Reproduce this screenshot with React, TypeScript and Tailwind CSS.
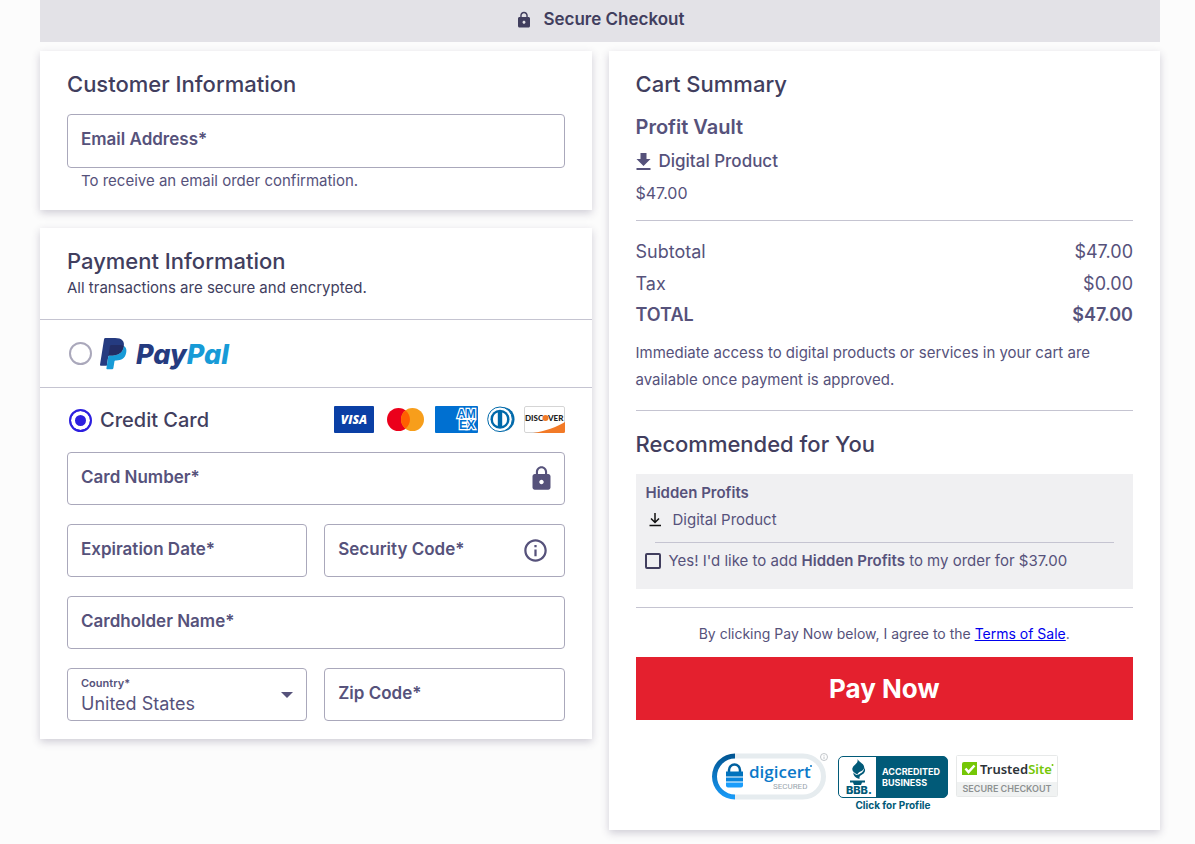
import { useState } from "react";
import type { ReactNode } from "react";
import { MdInfoOutline, MdLock } from "react-icons/md";

const fieldBox =
  "flex items-center rounded border border-[#aaa8bb] bg-white px-[13px] focus-within:border-[#2d1fdf]";

type FieldProps = {
  id: string;
  label: string;
  type?: string;
  className?: string;
  children?: ReactNode;
};

function Field({ id, label, type = "text", className = "h-[53px]", children }: FieldProps) {
  return (
    <div className={`${fieldBox} ${className}`}>
      <label htmlFor={id} className="shrink-0 pb-0.5 text-[17px] font-semibold">
        {label}
      </label>
      <input id={id} type={type} className="h-full min-w-0 flex-1 bg-transparent px-2 outline-none" />
      {children}
    </div>
  );
}

function Radio({ id, checked, onChange }: { id: string; checked: boolean; onChange: () => void }) {
  return (
    <input
      id={id}
      type="radio"
      name="method"
      checked={checked}
      onChange={onChange}
      className="size-[23px] shrink-0 appearance-none rounded-full border-2 border-[#aaa8bb] bg-white checked:border-[#2d1fdf] checked:bg-[#2d1fdf] checked:shadow-[inset_0_0_0_4px_white]"
    />
  );
}

function PayPalLogo() {
  return (
    <svg width="130" height="34" viewBox="0 0 130 34" role="img" aria-label="PayPal">
      <g transform="translate(0 1) scale(0.1035)">
        <path
          fill="#253b80"
          d="M217.168 23.507C203.234 7.625 178.046.816 145.823.816h-93.52A13.39 13.39 0 0 0 39.076 12.11L.136 259.077c-.774 4.87 2.997 9.28 7.933 9.28h57.736l14.5-91.971-.45 2.88c1.033-6.501 6.593-11.296 13.177-11.296h27.436c53.898 0 96.101-21.892 108.429-85.221.366-1.873.683-3.696.957-5.477 3.671-23.407-.025-39.34-12.686-53.765"
        />
        <path
          fill="#179bd7"
          d="M228.897 82.749c-12.328 63.32-54.53 85.221-108.429 85.221H93.024c-6.584 0-12.145 4.795-13.168 11.296L61.817 293.621c-.674 4.262 2.622 8.124 6.934 8.124h48.67a11.71 11.71 0 0 0 11.563-9.88l.474-2.48 9.173-58.136.591-3.213a11.71 11.71 0 0 1 11.562-9.88h7.284c47.147 0 84.064-19.154 94.852-74.55 4.503-23.15 2.173-42.478-9.739-56.054-3.613-4.112-8.1-7.508-13.327-10.28-.283 1.79-.59 3.604-.957 5.477z"
        />
        <path
          fill="#222d65"
          d="M216.952 72.128a89.928 89.928 0 0 0-5.818-1.49 109.904 109.904 0 0 0-6.177-1.174c-7.408-1.199-15.5-1.765-24.19-1.765h-73.309a11.57 11.57 0 0 0-5.053 1.149 11.683 11.683 0 0 0-6.51 8.74l-15.582 98.798-.45 2.88c1.025-6.501 6.585-11.296 13.17-11.296h27.444c53.898 0 96.1-21.892 108.428-85.221.367-1.873.675-3.688.958-5.477-3.122-1.648-6.501-3.072-10.14-4.279a83.26 83.26 0 0 0-2.77-.865"
        />
      </g>
      <text x="36" y="27" fontFamily="Inter, sans-serif" fontSize="27" fontWeight="800" fontStyle="italic">
        <tspan fill="#253b80">Pay</tspan>
        <tspan fill="#179bd7">Pal</tspan>
      </text>
    </svg>
  );
}

function CardBrands() {
  return (
    <svg width="231" height="28" viewBox="0 0 231 28" role="img" aria-label="Accepted cards">
      <rect x="0" y="0" width="40" height="27" rx="1" fill="#0a3fa5" />
      <text x="20" y="18" textAnchor="middle" fontFamily="'Open Sans', sans-serif" fontSize="12" fontWeight="800" fontStyle="italic" fill="#fff">
        VISA
      </text>

      <circle cx="64.5" cy="13.5" r="11.5" fill="#eb001b" />
      <circle cx="78.5" cy="13.5" r="11.5" fill="#f79e1b" />
      <path d="M71.5 4.4a11.5 11.5 0 0 1 0 18.2a11.5 11.5 0 0 1 0-18.2z" fill="#ff5f00" />

      <svg x="101" y="0" width="43" height="27">
        <rect width="43" height="27" rx="1" fill="#0070d1" />
        <g fontFamily="'Liberation Sans', Arial, sans-serif" fontSize="12" fontWeight="700" fill="#0070d1" stroke="#fff" strokeWidth="2.4" paintOrder="stroke">
          <text x="22" y="12">AM</text>
          <text x="24" y="23">EX</text>
        </g>
      </svg>

      <path d="M166 1h2c7.500 0 12.500 5.500 12.500 12.300S175 25.500 168 25.500h-2z" fill="#0069aa" />
      <circle cx="166" cy="13.300" r="12.300" fill="#fff" stroke="#0069aa" />
      <circle cx="166" cy="13.300" r="9.500" fill="#0069aa" />
      <path d="M163.800 6.500v13.600a7.200 7.200 0 0 1 0-13.600zM168.200 6.500v13.600a7.200 7.200 0 0 0 0-13.600z" fill="#fff" />

      <rect x="190.500" y=".5" width="40" height="26" rx="1.500" fill="#fff" stroke="#d5d5d5" />
      <path d="M199 27c12-2 24-6 32-11v9.500a1.500 1.500 0 0 1-1.500 1.500z" fill="#f27a27" />
      <g fontFamily="Lato, sans-serif" fontSize="8" fontWeight="900" fill="#222">
        <text x="191" y="15">DISC</text>
        <text x="214" y="15">VER</text>
      </g>
      <circle cx="211.500" cy="12" r="3" fill="#f27a27" />
    </svg>
  );
}

function DigicertSeal() {
  return (
    <svg width="119" height="58" viewBox="0 0 119 58" role="img" aria-label="DigiCert Secured">
      <defs>
        <linearGradient id="seal" x1="0" y1="0" x2="0" y2="1">
          <stop offset="0" stopColor="#00538f" />
          <stop offset="1" stopColor="#1a9dfb" />
        </linearGradient>
      </defs>
      <path d="M24 3h68a20.500 20.500 0 0 1 0 41H24" fill="none" stroke="#e6ecef" strokeWidth="5" />
      <path d="M24 0.500v5a18 18 0 0 0 0 36v5a23 23 0 0 1 0-46z" fill="url(#seal)" />
      <path d="M18 20v-3a5.500 5.500 0 0 1 11 0v3" fill="none" stroke="#00609f" strokeWidth="2.500" />
      <path d="M15 18.500h17v5H15z" fill="#0072bd" />
      <path d="M15 24.500h17v4H15z" fill="#0a86dc" />
      <path d="M15 29.500h17v3a2 2 0 0 1-2 2H17a2 2 0 0 1-2-2z" fill="#1a9dfb" />
      <text x="38" y="25" fontFamily="'Open Sans', sans-serif" fontSize="17" fontWeight="600" fill="#0b79c9">
        digicert
      </text>
      <circle cx="100" cy="13" r="1" fill="#0b79c9" />
      <text x="62" y="36" fontFamily="Roboto, sans-serif" fontSize="8" fill="#9aa5ad">
        SECURED
      </text>
      <circle cx="113" cy="4" r="3.500" fill="none" stroke="#b2b8bd" strokeWidth=".8" />
      <path d="M113 3.500v2.500M113 2v.8" stroke="#b2b8bd" strokeWidth=".8" />
    </svg>
  );
}

function BbbSeal() {
  return (
    <svg width="110" height="58" viewBox="0 0 110 58" role="img" aria-label="BBB Accredited Business">
      <rect x=".5" y="3.500" width="109" height="41" rx="4.500" fill="#fff" stroke="#015a78" />
      <path d="M38 3.500h67a4.500 4.500 0 0 1 4.500 4.500v32a4.500 4.500 0 0 1-4.500 4.500H38z" fill="#015a78" />
      <path d="M19.500 6c1 3 8 5 6.500 9.500-1 3-6 3-6.500 6-3-1.500-6-3.500-5-6.500 1-3.500 6-4 5-9z" fill="#015a78" />
      <path d="M26.500 14.500c2 5-1.500 6.500-4 8-1 .8-1.200 2-1 3.500-4-1-6.500-3.500-6-6.500 1.500 2 3 3 5 2 3-1.500 5.500-3 6-7z" fill="#015a78" />
      <path d="M12 27.500h15v2h-3l-1 2.500h-7l-1-2.500h-3z" fill="#015a78" />
      <text x="8" y="41" fontFamily="Inter, sans-serif" fontSize="11" fontWeight="800" fill="#015a78">
        BBB.
      </text>
      <g fontFamily="Inter, sans-serif" fontSize="9" fontWeight="700" fill="#fff">
        <text x="44" y="22">ACCREDITED</text>
        <text x="44" y="33">BUSINESS</text>
      </g>
      <text x="55" y="56" textAnchor="middle" fontFamily="Inter, sans-serif" fontSize="10" fontWeight="700" fill="#015a78">
        Click for Profile
      </text>
    </svg>
  );
}

function TrustedSiteSeal() {
  return (
    <svg width="102" height="58" viewBox="0 0 102 58" role="img" aria-label="TrustedSite Secure Checkout">
      <rect x=".5" y="2.500" width="101" height="41" rx="1" fill="#fff" stroke="#e7e9e9" />
      <path d="M1 29h100v14H1z" fill="#f0f2f2" />
      <path d="M8 9h13v13H6V11a2 2 0 0 1 2-2z" fill="#75c706" />
      <path d="M9.500 15.500l3 3.500 6-6.500" fill="none" stroke="#fff" strokeWidth="2.500" />
      <text x="24" y="21" fontFamily="'Noto Sans', sans-serif" fontSize="13" fontWeight="600">
        <tspan fill="#2d3338">Trusted</tspan>
        <tspan fill="#75c706">Site</tspan>
      </text>
      <circle cx="96.500" cy="12" r="1" fill="#75c706" />
      <text x="51" y="39" textAnchor="middle" fontFamily="Inter, sans-serif" fontSize="9" fontWeight="600" fill="#8d9191">
        SECURE CHECKOUT
      </text>
    </svg>
  );
}

const card = "bg-white shadow-[0_3px_8px_rgba(65,60,95,0.24)]";
const heading = "text-[22px] leading-[30px] font-medium text-[#413e5e]";
const rule = "border-[#c5c4d1]";

const totals = [
  { label: "Subtotal", value: "$47.00" },
  { label: "Tax", value: "$0.00" },
];

export default function App() {
  const [method, setMethod] = useState("card");

  return (
    <div className="min-h-screen bg-[#fcfcfc] pr-[35px] pb-3.5 pl-10 font-[Inter,sans-serif] text-[#56527b]">
      <header className="flex h-[42px] items-center justify-center gap-2.5 bg-[#e3e2e7] pb-[3px] text-[17px] font-semibold text-[#413e5e]">
        <MdLock size={18} />
        <span>Secure Checkout</span>
      </header>

      <main className="mt-[9px] grid grid-cols-2 items-start gap-[17px]">
        <div className="flex flex-col gap-[18px]">
          {/* Customer */}
          <section className={`${card} px-[27px] pt-[18px] pb-[17px]`}>
            <h2 className={heading}>Customer Information</h2>
            <Field id="email" type="email" label="Email Address*" className="mt-[15px] h-[54px]" />
            <p className="mt-px pl-3.5 text-[15px] leading-6">To receive an email order confirmation.</p>
          </section>

          {/* Payment */}
          <section className={`${card} pt-[18px] pb-[18px]`}>
            <div className={`border-b px-[27px] pb-[19px] ${rule}`}>
              <h2 className={heading}>Payment Information</h2>
              <p className="text-[15px] leading-6 text-[#413e5e]">
                All transactions are secure and encrypted.
              </p>
            </div>

            <div className={`flex h-[68px] items-center gap-2 border-b px-[29px] ${rule}`}>
              <Radio id="paypal" checked={method === "paypal"} onChange={() => setMethod("paypal")} />
              <label htmlFor="paypal">
                <PayPalLogo />
              </label>
            </div>

            <div className="flex h-16 items-center gap-2 pr-[27px] pl-[29px]">
              <Radio id="credit" checked={method === "card"} onChange={() => setMethod("card")} />
              <label htmlFor="credit" className="flex-1 text-[20px] font-medium text-[#413e5e]">
                Credit Card
              </label>
              <CardBrands />
            </div>

            <div className="grid grid-cols-2 gap-x-[17px] gap-y-[19px] px-[27px]">
              <Field id="number" label="Card Number*" className="col-span-2 h-[53px]">
                <MdLock size={27} className="-mr-1 shrink-0" />
              </Field>
              <Field id="expiry" label="Expiration Date*" />
              <Field id="cvc" label="Security Code*">
                <button type="button" aria-label="About the security code" className="mr-0.5 shrink-0">
                  <MdInfoOutline size={27} />
                </button>
              </Field>
              <Field id="holder" label="Cardholder Name*" className="col-span-2 h-[53px]" />
              <div className={`${fieldBox} h-[53px]`}>
                <div className="min-w-0 flex-1">
                  <label htmlFor="country" className="block text-[11px] leading-[18px] font-semibold">
                    Country*
                  </label>
                  <select
                    id="country"
                    className="block w-full appearance-none bg-transparent text-[18px] leading-6 outline-none"
                  >
                    <option>United States</option>
                    <option>Canada</option>
                  </select>
                </div>
                <svg width="12" height="6" viewBox="0 0 12 6" className="shrink-0" aria-hidden="true">
                  <path d="M0 0h12L6 6z" fill="currentColor" />
                </svg>
              </div>
              <Field id="zip" label="Zip Code*" />
            </div>
          </section>
        </div>

        {/* Cart */}
        <section className={`${card} px-[27px] pt-[18px] pb-[19px]`}>
          <h2 className={heading}>Cart Summary</h2>
          <h3 className="mt-3.5 text-[20px] leading-7 font-semibold">Profit Vault</h3>
          <p className="mt-1.5 flex items-center gap-2 text-[17px] leading-7 font-medium">
            <svg width="15" height="17" viewBox="5 3 14 17" aria-hidden="true">
              <path d="M19 9h-4V3H9v6H5l7 7 7-7zM5 18v2h14v-2H5z" fill="currentColor" />
            </svg>
            Digital Product
          </p>
          <p className="mt-1.5 text-[16px] leading-6">$47.00</p>

          <dl className={`mt-[15px] border-t pt-[15px] text-[18px] leading-8 ${rule}`}>
            {totals.map((row) => (
              <div key={row.label} className="flex justify-between">
                <dt>{row.label}</dt>
                <dd>{row.value}</dd>
              </div>
            ))}
            <div className="flex justify-between leading-[30px] font-semibold">
              <dt>TOTAL</dt>
              <dd>$47.00</dd>
            </div>
          </dl>
          <p className="mt-[9px] text-[15px] leading-[27px]">
            Immediate access to digital products or services in your cart are available once payment is
            approved.
          </p>

          <h2 className={`mt-[17px] border-t pt-[18px] ${rule} ${heading}`}>Recommended for You</h2>
          <div className="mt-[15px] bg-[#f0f0f2] px-2.5 pt-[5px] pb-[15px] text-[15px] leading-[27px]">
            <h3 className="font-semibold">Hidden Profits</h3>
            <p className="flex items-center gap-2.5">
              <svg width="15" height="15" viewBox="0 0 15 15" fill="none" stroke="#111" strokeWidth="1.5" aria-hidden="true" className="ml-0.5">
                <path d="M7 1v9M3 6.500l4 4 4-4M1.500 13.500h11.500" />
              </svg>
              Digital Product
            </p>
            <hr className={`mx-[9px] mt-[9px] ${rule}`} />
            <label className="mt-1 flex items-center gap-2">
              <input
                type="checkbox"
                className="-ml-px size-4 shrink-0 appearance-none rounded-[2px] border-2 border-[#413e5e] checked:bg-[#413e5e]"
              />
              <span>
                Yes! I'd like to add <b className="font-semibold">Hidden Profits</b> to my order for $37.00
              </span>
            </label>
          </div>

          <div className={`mt-[18px] border-t pt-3.5 ${rule}`}>
            <p className="text-center text-[14px] leading-6">
              By clicking Pay Now below, I agree to the{" "}
              <a href="#terms" className="text-[#0000ee] underline">
                Terms of Sale
              </a>
              .
            </p>
            <button type="button" className="mt-[11px] h-[63px] w-full bg-[#e4202e] text-[26px] font-bold text-white">
              Pay Now
            </button>
          </div>

          <div className="mt-[33px] flex justify-center gap-2">
            <DigicertSeal />
            <BbbSeal />
            <TrustedSiteSeal />
          </div>
        </section>
      </main>
    </div>
  );
}
